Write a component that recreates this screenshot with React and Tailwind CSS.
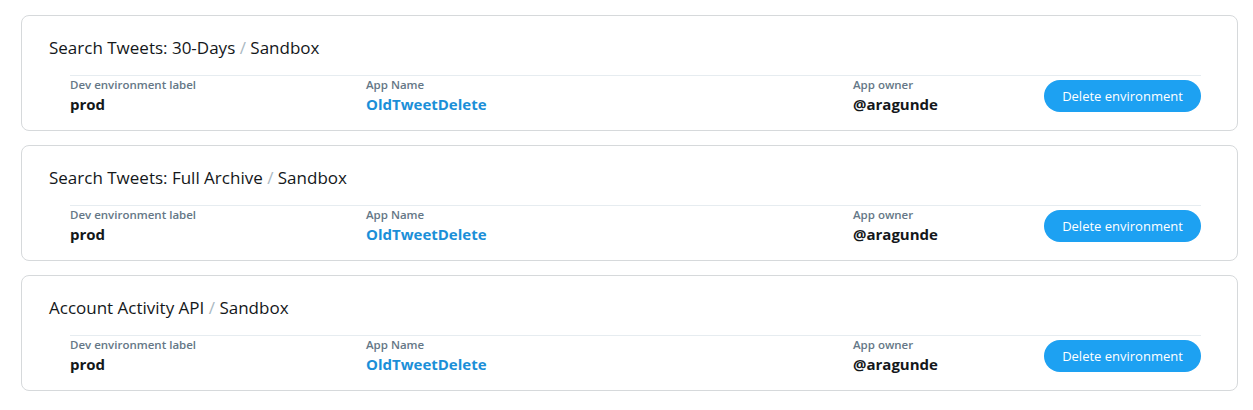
export default function App() {
  const items = [
    "Search Tweets: 30-Days",
    "Search Tweets: Full Archive",
    "Account Activity API",
  ];
  return (
    <div
      className="bg-white w-[1253px] h-[410px] pt-[15px] px-[21px] flex flex-col gap-[14px]"
      style={{ fontFamily: '"Open Sans", "Noto Sans", sans-serif' }}
    >
      {items.map((t) => (
        <div
          key={t}
          className="w-[1217px] h-[116px] shrink-0 border border-[#d6d9db] rounded-[8px] pt-[20px] pl-[27px] pr-[36px]"
        >
          <div className="text-[17px] leading-[24px] text-[#14171a] h-[24px]">
            {t} <span className="text-[#aab8c2]">/</span> Sandbox
          </div>
          <div className="ml-[21px] mt-[15px] border-t border-[#e6ecf0] flex items-start">
            <div className="w-[296px] flex flex-col">
              <span className="text-[11.5px] leading-[18px] font-semibold text-[#657786]">
                Dev environment label
              </span>
              <span className="text-[15px] leading-[20px] font-bold text-[#14171a]">
                prod
              </span>
            </div>
            <div className="w-[487px] flex flex-col">
              <span className="text-[11.5px] leading-[18px] font-semibold text-[#657786]">
                App Name
              </span>
              <span className="text-[15px] leading-[20px] font-bold text-[#1b8fd8]">
                OldTweetDelete
              </span>
            </div>
            <div className="flex-1 flex flex-col">
              <span className="text-[11.5px] leading-[18px] font-semibold text-[#657786]">
                App owner
              </span>
              <span className="text-[15px] leading-[20px] font-bold text-[#14171a]">
                @aragunde
              </span>
            </div>
            <button className="mt-[4px] w-[157px] h-[32px] rounded-full bg-[#1da1f2] text-white text-[13px] leading-[16px]">
              Delete environment
            </button>
          </div>
        </div>
      ))}
    </div>
  );
}
